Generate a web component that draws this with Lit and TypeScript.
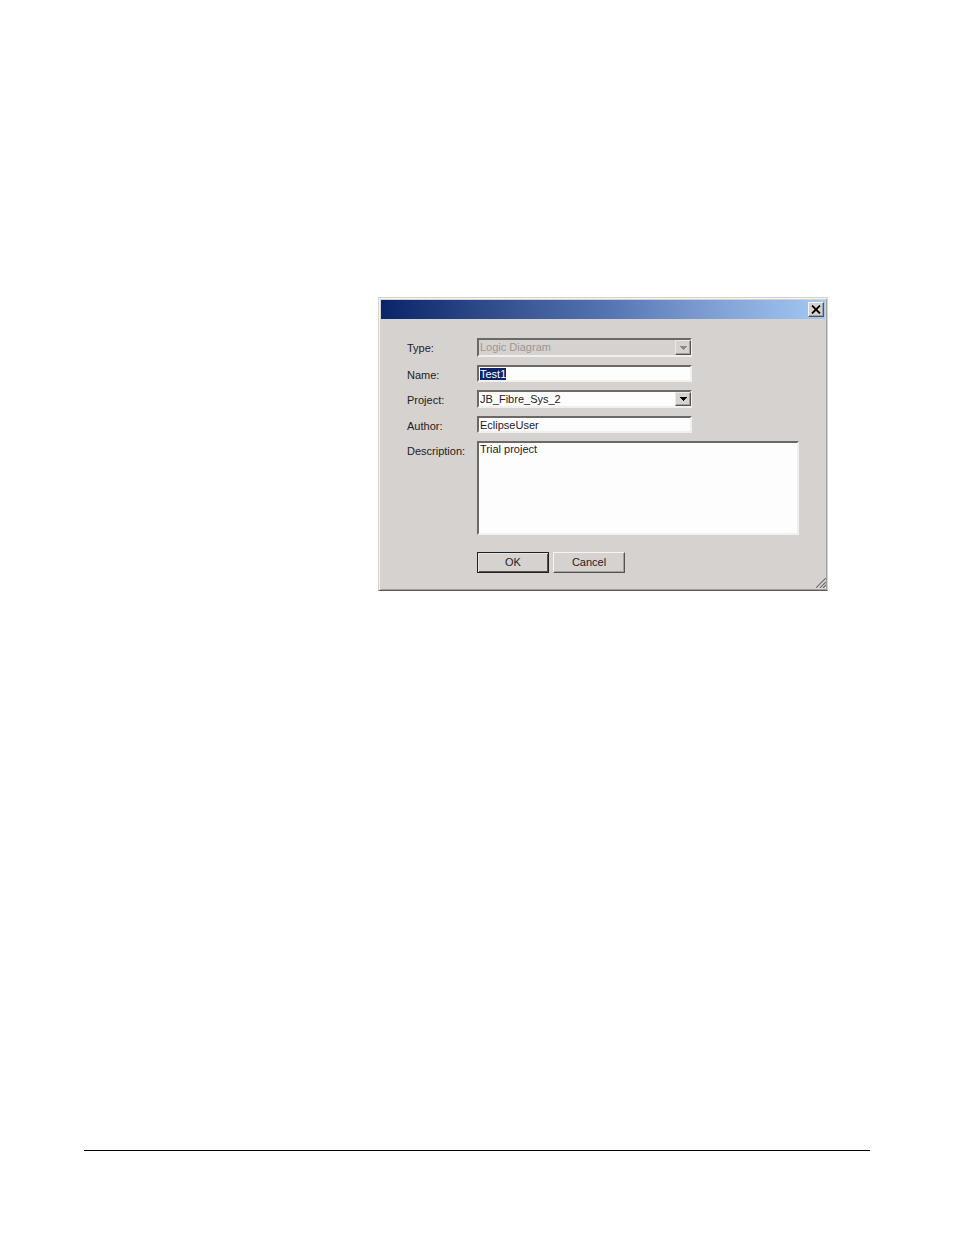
import { css, html, LitElement } from "lit";
import { customElement, property, query } from "lit/decorators.js";

@customElement("combo-arrow")
export class ComboArrowElement extends LitElement {
  @property({ reflect: true, type: Boolean })
  disabled: boolean = false;

  render() {
    return html`
      <svg width="7" height="4" viewBox="0 0 7 4" aria-hidden="true" shape-rendering="crispEdges">
        <path d="M0 0h7v1h-1v1h-1v1h-1v1h-1v-1h-1v-1h-1v-1h-1z" />
      </svg>
    `;
  }

  static styles = css`
    :host {
      display: flex;
      align-items: center;
      justify-content: center;
      box-sizing: border-box;
      width: 16px;
      border: 1px solid;
      border-color: #eceae8 #555250 #555250 #eceae8;
      box-shadow: inset -1px -1px #a3a09e;
      background-color: #d6d2cf;
      pointer-events: none;
      fill: #000;
    }
    :host([disabled]) {
      fill: #8b8886;
    }
  `;
}

@customElement("diagram-dialog")
export class DiagramDialogElement extends LitElement {
  @query("#name")
  nameInput!: HTMLInputElement;

  firstUpdated() {
    this.nameInput.focus();
    this.nameInput.select();
  }

  render() {
    return html`
      <section class="window" role="dialog" aria-label="Diagram properties">
        <header>
          <button class="close" type="button" aria-label="Close">
            <svg width="10" height="9" viewBox="0 0 10 9" aria-hidden="true">
              <path d="M1 0.5L9 8.5M9 0.5L1 8.5" stroke="#000" stroke-width="1.8" />
            </svg>
          </button>
        </header>
        <form @submit=${this._onSubmit}>
          <label for="type">Type:</label>
          <div class="combo">
            <select id="type" disabled>
              <option>Logic Diagram</option>
            </select>
            <combo-arrow disabled></combo-arrow>
          </div>

          <label for="name">Name:</label>
          <input id="name" type="text" value="Test1" autocomplete="off" />

          <label for="project">Project:</label>
          <div class="combo">
            <select id="project">
              <option>JB_Fibre_Sys_2</option>
            </select>
            <combo-arrow></combo-arrow>
          </div>

          <label for="author">Author:</label>
          <input id="author" type="text" value="EclipseUser" autocomplete="off" />

          <label for="description">Description:</label>
          <textarea id="description" .value=${"Trial project"}></textarea>

          <div class="buttons">
            <button class="default" type="submit">OK</button>
            <button type="button">Cancel</button>
          </div>
        </form>
        <svg class="grip" width="10" height="10" viewBox="0 0 10 10" aria-hidden="true">
          <path d="M1 10L10 1M5 10L10 5M9 10L10 9" stroke="#fff" />
          <path d="M0 10L10 0M4 10L10 4M7 10L10 7" stroke="#777371" stroke-width="1.3" />
        </svg>
      </section>
    `;
  }

  _onSubmit(ev: Event) {
    ev.preventDefault();
  }

  static styles = css`
    :host {
      display: block;
      font: 11px/13px "Liberation Sans", Arial, sans-serif;
      color: #24201f;
    }
    * {
      box-sizing: border-box;
    }
    .window {
      position: relative;
      border: 1px solid;
      border-color: #d6d2cf #d6d2cf #5f5c5a #d6d2cf;
      box-shadow: inset 1px 1px #f4f3f1, inset -1px -1px #a3a09e;
      background-color: #d6d2cf;
      padding: 2px;
    }
    header {
      display: flex;
      justify-content: flex-end;
      align-items: center;
      height: 19px;
      padding-right: 1px;
      background: linear-gradient(to right, #0a246a, #34528f 28%, #5576b3 52%, #7b9bd0 72%, #a2c9f4);
    }
    button {
      display: flex;
      align-items: center;
      justify-content: center;
      width: 72px;
      height: 21px;
      margin: 0;
      padding: 0;
      border: 1px solid;
      border-color: #f6f5f3 #555250 #555250 #f6f5f3;
      border-radius: 0;
      box-shadow: inset -1px -1px #a3a09e;
      background-color: #d6d2cf;
      color: inherit;
      font: inherit;
    }
    .close {
      width: 16px;
      height: 15px;
    }
    .default {
      border-color: #24201f;
      box-shadow: inset 1px 1px #e6e3e1, inset -1px -1px #55504e;
    }
    form {
      display: grid;
      grid-template-columns: 70px minmax(0, 1fr);
      grid-template-rows: 19px 17px 18px 17px 94px;
      row-gap: 8px;
      padding: 19px 26px 15px;
    }
    label {
      padding-top: 4px;
    }
    input,
    select,
    textarea {
      width: 100%;
      height: 100%;
      margin: 0;
      padding: 0 1px;
      appearance: none;
      border: 2px solid;
      border-color: #6b6866 #f1f0ee #f1f0ee #6b6866;
      border-radius: 0;
      outline: none;
      background-color: #fdfdfd;
      color: inherit;
      font: inherit;
    }
    input,
    .combo {
      max-width: 215px;
    }
    textarea {
      display: block;
      resize: none;
    }
    .combo {
      display: grid;
      grid-template-columns: minmax(0, 1fr) 17px;
    }
    .combo > * {
      grid-row: 1;
    }
    .combo select {
      grid-column: 1 / 3;
    }
    .combo combo-arrow {
      grid-column: 2;
      margin: 2px 0;
      z-index: 1;
    }
    select:disabled {
      background-color: #d6d2cf;
      color: #9b9795;
      opacity: 1;
    }
    input::selection {
      background-color: #0a246a;
      color: #fff;
    }
    .buttons {
      grid-column: 2;
      display: flex;
      gap: 4px;
      padding-top: 9px;
    }
    .grip {
      position: absolute;
      right: 1px;
      bottom: 2px;
    }
  `;
}

@customElement("app-root")
export class AppRootElement extends LitElement {
  render() {
    return html`
      <main>
        <diagram-dialog></diagram-dialog>
      </main>
      <hr />
    `;
  }

  static styles = css`
    :host {
      display: flex;
      flex-direction: column;
      box-sizing: border-box;
      min-height: 100vh;
      padding: 297px 84px 84px;
      background-color: #fff;
    }
    main {
      display: flex;
      justify-content: flex-end;
      padding-right: 42px;
    }
    diagram-dialog {
      width: 450px;
      max-width: 100%;
    }
    hr {
      width: 100%;
      margin: auto 0 0;
      border: 0;
      border-top: 1px solid #000;
    }
  `;
}
